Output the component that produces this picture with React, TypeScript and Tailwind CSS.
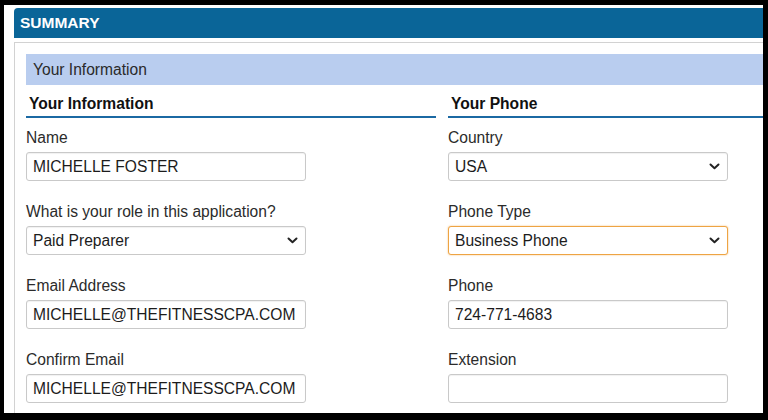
import React from 'react';

type Field = {
    label: string
    value: string
    select?: boolean
    focused?: boolean
}

const leftFields: Field[] = [
    { label: "Name", value: "MICHELLE FOSTER" },
    { label: "What is your role in this application?", value: "Paid Preparer", select: true },
    { label: "Email Address", value: "MICHELLE@THEFITNESSCPA.COM" },
    { label: "Confirm Email", value: "MICHELLE@THEFITNESSCPA.COM" },
];

const rightFields: Field[] = [
    { label: "Country", value: "USA", select: true },
    { label: "Phone Type", value: "Business Phone", select: true, focused: true },
    { label: "Phone", value: "724-771-4683" },
    { label: "Extension", value: "" },
];

const Chevron = () => (
    <svg width="11" height="7" viewBox="0 0 11 7" className="shrink-0">
        <path d="M1.5 1.5 L5.5 5.2 L9.5 1.5" fill="none" stroke="#222" strokeWidth="2" strokeLinecap="round" strokeLinejoin="round" />
    </svg>
);

const FormField = ({ label, value, select, focused }: Field) => (
    <div className="flex flex-col">
        <div className="h-[18px] leading-[18px] text-[#2b2b2b]">{label}</div>
        <div
            className={`mt-[5px] flex h-[29px] w-[280px] items-center justify-between rounded-[3px] border bg-white pl-[6px] pr-[7px] text-[#1c1c1c] ${
                focused
                    ? "border-[#eea443] shadow-[0_0_2px_rgba(238,164,67,0.7)]"
                    : "border-[#c9c9c9] shadow-[inset_0_1px_1px_rgba(0,0,0,0.06)]"
            }`}
        >
            <span className="whitespace-nowrap leading-[18px]">{value}</span>
            {select && <Chevron />}
        </div>
    </div>
);

const Column = ({ title, fields }: { title: string; fields: Field[] }) => (
    <div className="flex flex-col">
        <div className="border-b-2 border-[#1b69a3] pl-[3px] pt-[10px] pb-[3px] font-bold leading-[18px] text-[#111]">
            {title}
        </div>
        <div className="flex flex-col gap-[22px] pt-[11px]">
            {fields.map((f) => (
                <FormField key={f.label} {...f} />
            ))}
        </div>
    </div>
);

const App = () => {
    return (
        <div
            className="h-[420px] w-[768px] overflow-hidden bg-black pl-[4px] pt-[5px] text-[15.6px]"
            style={{ fontFamily: '"Liberation Sans", Arial, sans-serif' }}
        >
            <div className="flex h-[408px] w-[759px] flex-col overflow-hidden bg-white pl-[10px] pt-[3px]">
                <div className="flex h-[30px] items-center rounded-tl-[4px] bg-[#0a6598] pl-[6px] text-[15.5px] font-bold text-white">
                    SUMMARY
                </div>
                <div className="mt-[4px] flex-1 border-l border-t border-[#d2d2d2] pl-[11px] pt-[11px]">
                    <div className="flex h-[31px] items-center bg-[#b9cdef] pl-[7px] text-[#2a2a2a]">
                        Your Information
                    </div>
                    <div className="grid grid-cols-[410px_1fr] gap-x-[12px]">
                        <Column title="Your Information" fields={leftFields} />
                        <Column title="Your Phone" fields={rightFields} />
                    </div>
                </div>
            </div>
        </div>
    );
};

export default App;
